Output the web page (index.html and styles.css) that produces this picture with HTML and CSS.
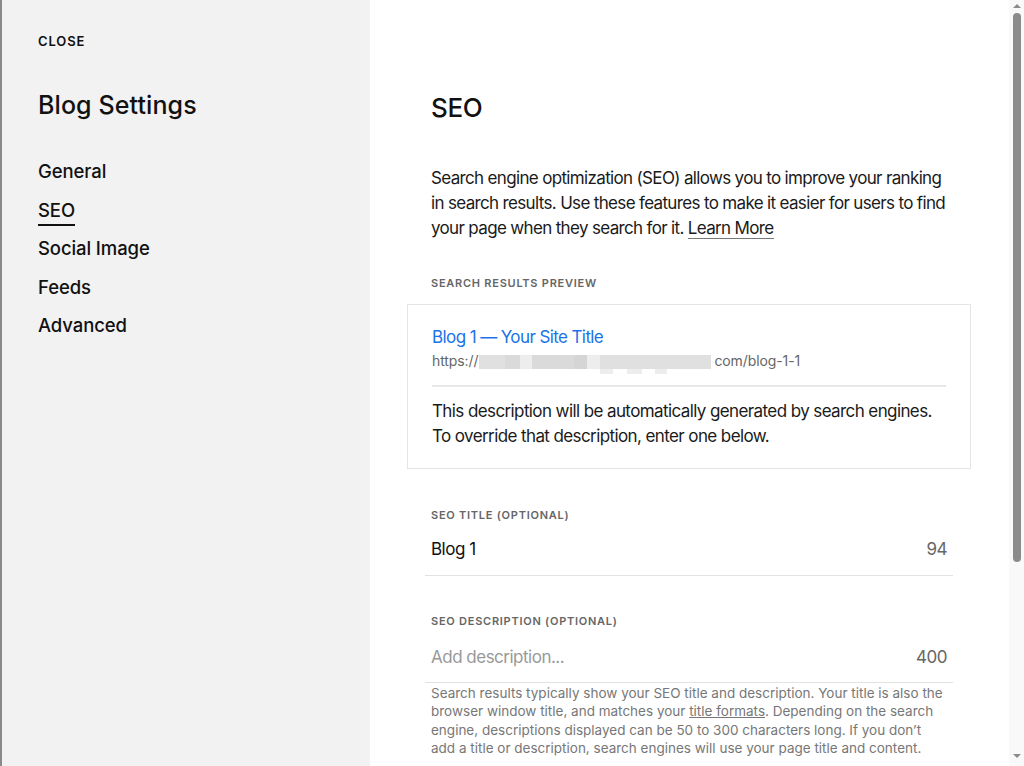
FILE: index.html
```html
<!DOCTYPE html>
<html lang="en">
<head>
    <meta charset="UTF-8">
    <meta name="viewport" content="width=device-width, initial-scale=1.0">
    <title>Blog Settings</title>
    <link rel="stylesheet" href="styles.css">
</head>
<body>
    <div class="app">
        <!-- Left panel: close link, title and section nav -->
        <aside class="sidebar">
            <a class="close-link" href="#">CLOSE</a>
            <h1 class="panel-title">Blog Settings</h1>
            <nav class="panel-nav">
                <a href="#">General</a>
                <a href="#" class="active">SEO</a>
                <a href="#">Social Image</a>
                <a href="#">Feeds</a>
                <a href="#">Advanced</a>
            </nav>
        </aside>

        <!-- Right panel: SEO settings -->
        <main class="main">
            <div class="pane">
                <div class="content">
                    <h2 class="section-title">SEO</h2>
                    <p class="intro">Search engine optimization (SEO) allows you to improve your ranking in search results. Use these features to make it easier for users to find your page when they search for it. <a href="#">Learn More</a></p>

                    <div class="field-label preview-label">SEARCH RESULTS PREVIEW</div>
                    <div class="preview">
                        <div class="preview-title">Blog 1 — Your Site Title</div>
                        <div class="preview-url">
                            <span>https://</span>
                            <span class="blurred">
                                <span class="row">
                                    <i class="b1 w26"></i><i class="b2 w15"></i><i class="b3 w12"></i><i class="b2 w42"></i><i class="b4 w13"></i><i class="b3 w13"></i><i class="b1 w111"></i>
                                </span>
                                <span class="row low">
                                    <i class="b0 w121"></i><i class="b3 w13"></i><i class="b0 w14"></i><i class="b3 w15"></i><i class="b0 w13"></i><i class="b3 w12"></i>
                                </span>
                            </span>
                            <span>com/blog-1-1</span>
                        </div>
                        <p class="preview-desc">This description will be automatically generated by search engines. To override that description, enter one below.</p>
                    </div>

                    <div class="field">
                        <div class="field-label">SEO TITLE (OPTIONAL)</div>
                        <div class="field-input">
                            <span class="value">Blog 1</span>
                            <span class="count">94</span>
                        </div>
                    </div>

                    <div class="field">
                        <div class="field-label">SEO DESCRIPTION (OPTIONAL)</div>
                        <div class="field-input">
                            <span class="value placeholder">Add description...</span>
                            <span class="count">400</span>
                        </div>
                        <p class="help">Search results typically show your SEO title and description. Your title is also the browser window title, and matches your <a href="#">title formats</a>. Depending on the search engine, descriptions displayed can be 50 to 300 characters long. If you don’t add a title or description, search engines will use your page title and content.</p>
                    </div>
                </div>
            </div>

            <!-- scrollbar of the settings pane -->
            <div class="scrollbar">
                <span class="arrow up"></span>
                <span class="thumb"></span>
                <span class="arrow down"></span>
            </div>
        </main>
    </div>
</body>
</html>
```

FILE: styles.css
```css
html, body {
    margin: 0;
    height: 100%;
}
body {
    font-family: 'Inter', 'Liberation Sans', sans-serif;
    color: #111;
    overflow: hidden;
}
a {
    color: inherit;
    text-decoration: none;
}
.app {
    display: flex;
    height: 100vh;
}

/* sidebar */
.sidebar {
    width: 370px;
    flex-shrink: 0;
    background: #f2f2f2;
    border-left: 2px solid #8a8a8a;
    padding: 33px 0 0 36px;
    box-sizing: border-box;
}
.close-link {
    display: block;
    font-size: 13px;
    font-weight: 600;
    letter-spacing: 0.9px;
    line-height: 16px;
}
.panel-title {
    margin: 41px 0 0;
    font-size: 25px;
    font-weight: 500;
    line-height: 30px;
    letter-spacing: 0.1px;
}
.panel-nav {
    margin-top: 39px;
    display: flex;
    flex-direction: column;
    align-items: flex-start;
    gap: 14.5px;
}
.panel-nav a {
    font-size: 18.5px;
    font-weight: 500;
    line-height: 24px;
    letter-spacing: -0.1px;
}
.panel-nav a.active {
    padding-bottom: 4px;
    margin-bottom: -4px;
    box-shadow: inset 0 -2px 0 #111;
}

/* main panel */
.main {
    flex: 1;
    display: flex;
    background: #fff;
    min-width: 0;
}
.pane {
    flex: 1;
    overflow: hidden;
}
.content {
    width: 516px;
    padding: 92px 0 0 61px;
}
.section-title {
    margin: 0;
    font-size: 26px;
    font-weight: 500;
    line-height: 32px;
    letter-spacing: -0.3px;
}
.intro {
    margin: 42px 0 0;
    font-size: 17px;
    line-height: 25px;
    letter-spacing: -0.66px;
    color: #1a1a1a;
}
.intro a {
    border-bottom: 1px solid #777;
}
.field-label {
    font-size: 11px;
    font-weight: 600;
    letter-spacing: 0.75px;
    color: #666;
    line-height: 14px;
}
.preview-label {
    margin-top: 35px;
}

/* search preview card */
.preview {
    margin: 14px -24px 0;
    border: 1px solid #e4e4e4;
    padding: 20px 24px 19px;
}
.preview-title {
    font-size: 17px;
    line-height: 24px;
    color: #1a73e8;
    letter-spacing: -0.6px;
}
.preview-url {
    display: flex;
    align-items: flex-start;
    margin-top: 2px;
    font-size: 14px;
    line-height: 20px;
    color: #666;
    letter-spacing: -0.1px;
    padding-bottom: 11px;
    border-bottom: 2px solid #e8e8e8;
}
.blurred {
    display: flex;
    flex-direction: column;
    margin: 4px 3px 0 1px;
}
.blurred .row {
    display: flex;
    height: 14px;
}
.blurred .row.low {
    height: 5px;
}
.blurred i {
    display: block;
}
.blurred .b0 { background: transparent; }
.blurred .b1 { background: #e0e0e0; }
.blurred .b2 { background: #dadada; }
.blurred .b3 { background: #ededed; }
.blurred .b4 { background: #d5d5d5; }
.blurred .w12 { width: 12px; }
.blurred .w13 { width: 13px; }
.blurred .w14 { width: 14px; }
.blurred .w15 { width: 15px; }
.blurred .w26 { width: 26px; }
.blurred .w42 { width: 42px; }
.blurred .w111 { width: 111px; }
.blurred .w121 { width: 121px; }
.preview-desc {
    margin: 12px 0 0;
    font-size: 17px;
    line-height: 25px;
    letter-spacing: -0.6px;
    color: #1a1a1a;
}

/* form fields */
.field {
    margin-top: 39px;
}
.field + .field {
    margin-top: 38px;
}
.field-input {
    display: flex;
    justify-content: space-between;
    align-items: center;
    margin: 0 -6px;
    padding: 16px 6px 14px;
    border-bottom: 1px solid #e2e2e2;
    font-size: 17px;
    line-height: 23px;
    letter-spacing: -0.5px;
}
.field + .field .field-input {
    padding: 18px 6px 13px;
}
.field-input .count {
    color: #666;
}
.field-input .placeholder {
    color: #999;
}
.help {
    margin: 1px 0 0;
    font-size: 13.5px;
    line-height: 18.3px;
    color: #777;
    letter-spacing: 0;
}
.help a {
    text-decoration: underline;
}

/* scrollbar */
.scrollbar {
    width: 15px;
    flex-shrink: 0;
    background: #f9f9f9;
    display: flex;
    flex-direction: column;
    align-items: center;
    padding: 4px 0 8px;
    box-sizing: border-box;
}
.arrow {
    width: 0;
    height: 0;
    border-left: 4px solid transparent;
    border-right: 4px solid transparent;
}
.arrow.up {
    border-bottom: 4px solid #8b8b8b;
}
.arrow.down {
    margin-top: auto;
    border-top: 4px solid #8b8b8b;
}
.thumb {
    width: 8px;
    height: 549px;
    margin-top: 5px;
    background: #8b8b8b;
    border-radius: 4px;
}
```
